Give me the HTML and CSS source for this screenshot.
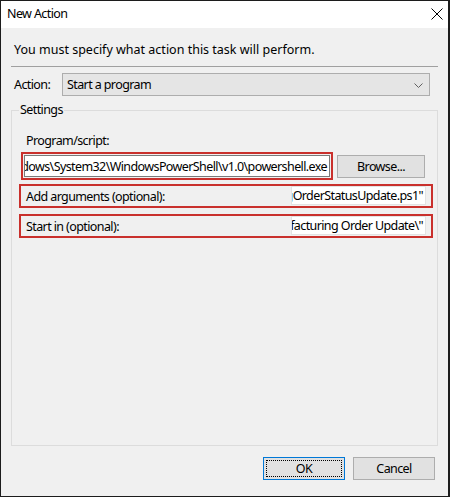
FILE: index.html
```html
<!DOCTYPE html>
<html lang="en">
<head>
    <meta charset="UTF-8">
    <title>New Action</title>
    <link rel="stylesheet" href="styles.css">
</head>
<body>
    <div class="window">
        <div class="titlebar">
            <span class="title">New Action</span>
            <svg class="close" width="12" height="12" viewBox="0 0 12 12">
                <path d="M0.5 0.5L11.5 11.5M11.5 0.5L0.5 11.5" stroke="#000" stroke-width="1" fill="none"/>
            </svg>
        </div>
        <div class="content">
            <p class="intro">You must specify what action this task will perform.</p>
            <div class="divider"></div>
            <div class="action-row">
                <span class="action-label">Action:</span>
                <div class="combo">
                    <span>Start a program</span>
                    <svg class="chevron" width="9" height="5" viewBox="0 0 9 5">
                        <path d="M0.5 0.5L4.5 4.5L8.5 0.5" stroke="#606060" stroke-width="1" fill="none"/>
                    </svg>
                </div>
            </div>
            <fieldset class="settings">
                <legend>Settings</legend>
                <div class="field-label">Program/script:</div>
                <div class="program-row">
                    <div class="mark program-mark">
                        <div class="textbox"><span>C:\Windows\System32\WindowsPowerShell\v1.0\powershell.exe</span></div>
                    </div>
                    <button class="btn browse">Browse...</button>
                </div>
                <div class="mark inline-row">
                    <span class="inline-label">Add arguments (optional):</span>
                    <div class="textbox short"><span>ProcessingOrderStatusUpdate.ps1"</span></div>
                </div>
                <div class="mark inline-row start-row">
                    <span class="inline-label">Start in (optional):</span>
                    <div class="textbox short"><span>"C:\Scripts\Manufacturing Order Update\"</span></div>
                </div>
            </fieldset>
            <div class="actions">
                <button class="btn btn-default"><span class="focus">OK</span></button>
                <button class="btn">Cancel</button>
            </div>
        </div>
    </div>
</body>
</html>
```

FILE: styles.css
```css
body {
    margin: 0;
    font-family: "Noto Sans", "Open Sans", sans-serif;
    font-size: 12.5px;
    letter-spacing: -0.6px;
    color: #000;
    background: #fff;
}

.window {
    width: 450px;
    height: 497px;
    box-sizing: border-box;
    border: 1px solid #1c1c1c;
    border-right-width: 2px;
    background: #f0f0f0;
    display: flex;
    flex-direction: column;
}

.titlebar {
    height: 27px;
    background: #fff;
    display: flex;
    align-items: center;
    justify-content: space-between;
    padding: 0 5px 0 6px;
    flex-shrink: 0;
}

.title {
    line-height: 16px;
    margin-top: -1px;
}

.close {
    margin-top: -2px;
}

.content {
    flex: 1;
    display: flex;
    flex-direction: column;
    padding: 14px 10px 16px 10px;
    min-height: 0;
}

.intro {
    margin: 0 0 0 3px;
    line-height: 16px;
    letter-spacing: 0;
}

.divider {
    height: 1px;
    background: #a0a0a0;
    margin-top: 8px;
}

.action-row {
    display: flex;
    align-items: center;
    margin-top: 6px;
}

.action-label {
    margin-left: 3px;
}

.combo {
    margin-left: auto;
    margin-right: 8px;
    width: 368px;
    height: 23px;
    box-sizing: border-box;
    border: 1px solid #adadad;
    background: #e5e5e5;
    display: flex;
    align-items: center;
    justify-content: space-between;
    padding: 0 6px 0 4px;
}

.chevron {
    margin-top: 1px;
}

.settings {
    flex: 1;
    margin: 6px 0 0 0;
    padding: 15px 4px 0 7px;
    border: 1px solid #dcdcdc;
    min-width: 0;
}

.settings legend {
    padding: 0 1px;
    margin-left: 0;
    line-height: 16px;
}

.field-label {
    margin-left: 7px;
    line-height: 16px;
}

.program-row {
    display: flex;
    align-items: center;
    margin-top: 3px;
}

/* red highlight boxes from the screenshot */
.mark {
    border: 2px solid #c9302c;
    box-sizing: border-box;
}

.program-mark {
    margin-left: 2px;
    width: 312px;
    height: 28px;
    padding: 1px;
}

.textbox {
    height: 22px;
    box-sizing: border-box;
    border: 1px solid #7a7a7a;
    background: #fff;
    display: flex;
    justify-content: flex-end;
    align-items: center;
    overflow: hidden;
    white-space: nowrap;
    padding: 0 2px;
}

.textbox.short {
    width: 135px;
    height: 19px;
    border-color: #e3e3e3;
    margin-left: auto;
    margin-right: 5px;
    margin-bottom: 1px;
}

.inline-row {
    display: flex;
    align-items: center;
    height: 24px;
    margin-top: 4px;
}

.start-row {
    margin-top: 6px;
}

.inline-label {
    padding-left: 5px;
}

.btn {
    font: inherit;
    letter-spacing: inherit;
    color: #000;
    background: #e1e1e1;
    border: 1px solid #adadad;
    height: 23px;
    padding: 0;
    box-sizing: border-box;
}

.browse {
    width: 88px;
    margin-left: 4px;
}

.actions {
    display: flex;
    justify-content: flex-end;
    gap: 8px;
    margin: 11px 3px 0 0;
}

.actions .btn {
    width: 82px;
}

.btn-default {
    border-color: #0078d7;
    padding: 2px;
    display: flex;
}

.focus {
    flex: 1;
    border: 1px dotted #000;
    display: flex;
    align-items: center;
    justify-content: center;
}
```
